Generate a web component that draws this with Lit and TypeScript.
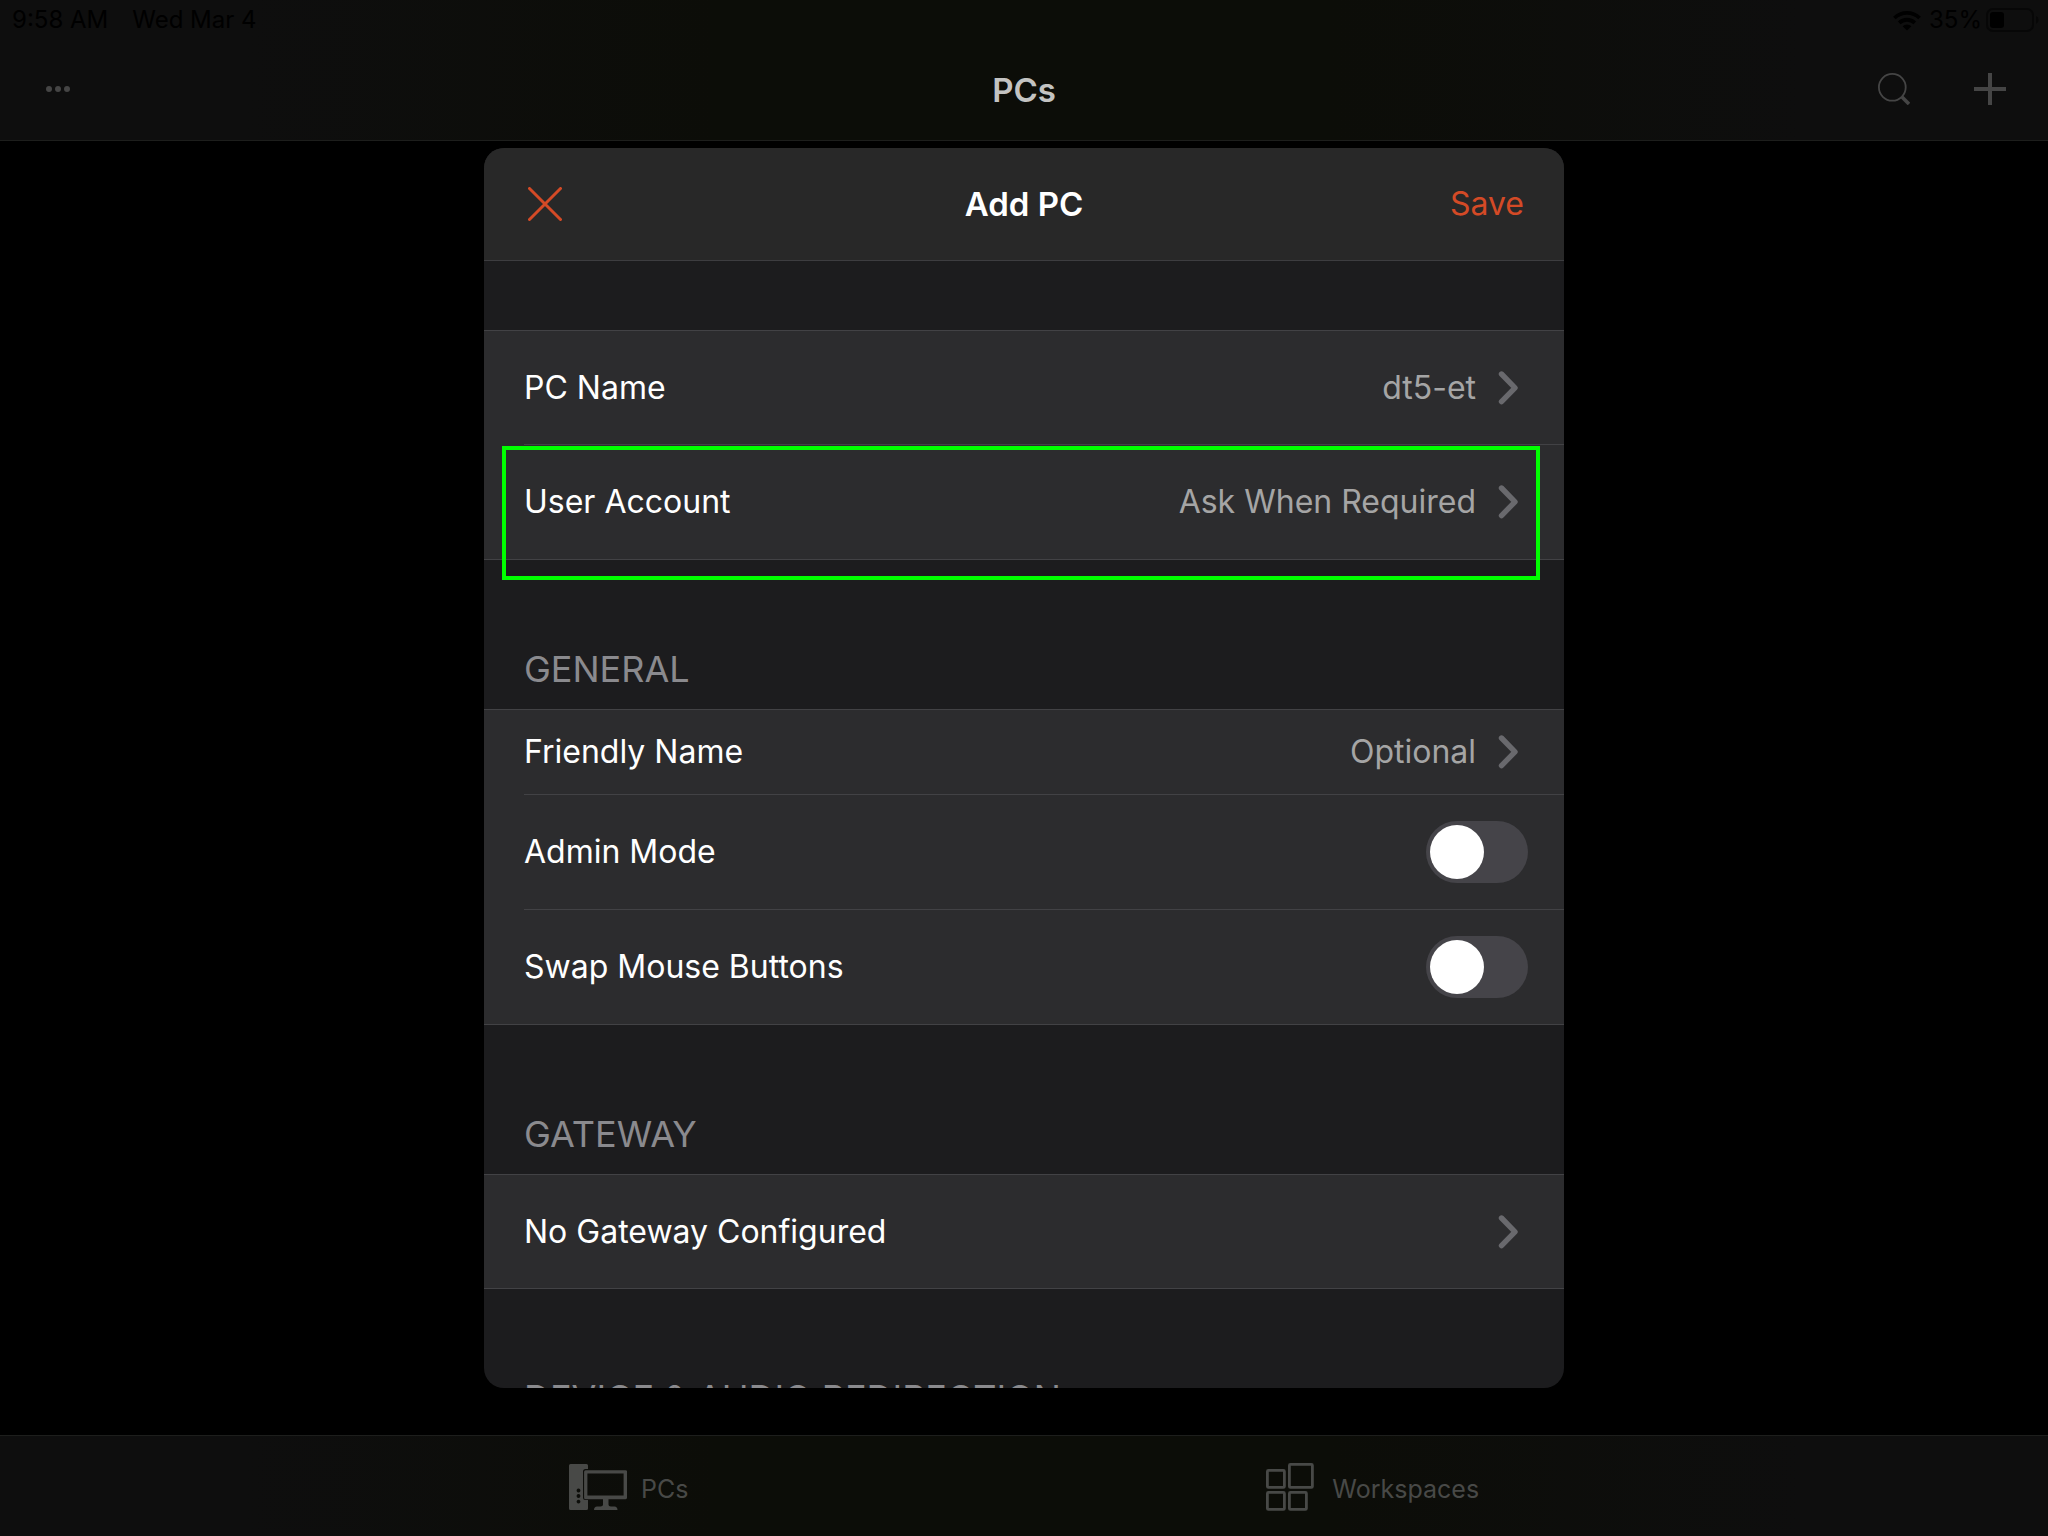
import { LitElement, html, css, svg, nothing } from "lit";
import { customElement, state } from "lit/decorators.js";

interface Row {
  kind: "link" | "switch";
  label: string;
  value?: string;
  compact?: boolean;
  marked?: boolean;
}

interface Section {
  title?: string;
  rows: Row[];
}

const SECTIONS: Section[] = [
  {
    rows: [
      { kind: "link", label: "PC Name", value: "dt5-et" },
      { kind: "link", label: "User Account", value: "Ask When Required", marked: true },
    ],
  },
  {
    title: "General",
    rows: [
      { kind: "link", label: "Friendly Name", value: "Optional", compact: true },
      { kind: "switch", label: "Admin Mode" },
      { kind: "switch", label: "Swap Mouse Buttons" },
    ],
  },
  { title: "Gateway", rows: [{ kind: "link", label: "No Gateway Configured" }] },
  { title: "Device & Audio Redirection", rows: [] },
];

const moreIcon = svg`<svg width="24" height="6" viewBox="0 0 24 6" fill="currentColor" aria-hidden="true">
  <circle cx="3" cy="3" r="3"/><circle cx="12" cy="3" r="3"/><circle cx="21" cy="3" r="3"/></svg>`;

const searchIcon = svg`<svg width="32" height="32" viewBox="0 0 32 32" fill="none" stroke="currentColor" aria-hidden="true">
  <circle cx="14.3" cy="14.3" r="13.4" stroke-width="1.8"/><path d="M24 24l7 7" stroke-width="3.6"/></svg>`;

const plusIcon = svg`<svg width="32" height="32" viewBox="0 0 32 32" fill="none" stroke="currentColor" stroke-width="4" aria-hidden="true">
  <path d="M16 0v32M0 16h32"/></svg>`;

const closeIcon = svg`<svg width="34" height="34" viewBox="0 0 34 34" fill="none" stroke="currentColor" stroke-width="3" stroke-linecap="round" aria-hidden="true">
  <path d="M1.5 1.5l31 31M32.5 1.5l-31 31"/></svg>`;

const chevronIcon = svg`<svg class="chevron" width="20" height="34" viewBox="0 0 20 34" fill="none" stroke="currentColor" stroke-width="5.4" stroke-linecap="round" stroke-linejoin="round" aria-hidden="true">
  <path d="M3.500 3l13.500 13.800L3.500 30.600"/></svg>`;

const wifiIcon = svg`<svg width="28" height="21" viewBox="0 0 28 21" fill="none" stroke="currentColor" stroke-width="3.8" aria-hidden="true">
  <path d="M1.4 8a18 18 0 0 1 25.2 0"/><path d="M6.2 12.9a11.2 11.2 0 0 1 15.6 0"/>
  <path d="M9.6 16.3a6.4 6.4 0 0 1 8.8 0L14 20.6z" fill="currentColor" stroke="none"/></svg>`;

const batteryIcon = svg`<svg width="54" height="24" viewBox="0 0 54 24" aria-hidden="true">
  <rect x="1" y="1" width="46" height="22" rx="6" fill="none" stroke="#070707" stroke-width="2"/>
  <rect x="4" y="4" width="14" height="16" rx="3" fill="#000"/>
  <path d="M50 8a4.4 4.4 0 0 1 0 8z" fill="#070707"/></svg>`;

const pcIcon = svg`<svg width="58" height="46" viewBox="0 0 58 46" fill="currentColor" aria-hidden="true">
  <path fill-rule="evenodd" d="M1.5 0h16a1.500 1.500 0 0 1 1.500 1.500V5H16.500a2.500 2.500 0 0 0-2.500 2.500V33.500a2.500 2.500 0 0 0 2.500 2.500H19V44.500a1.500 1.500 0 0 1-1.500 1.500H1.5A1.500 1.500 0 0 1 0 44.500V1.500A1.500 1.500 0 0 1 1.500 0z
  M9.500 24.600a1.900 1.900 0 1 0 .01 0zM9.500 30.100a1.900 1.900 0 1 0 .01 0zM9.500 35.700a1.900 1.900 0 1 0 .01 0z"/>
  <path fill-rule="evenodd" d="M16.600 6.200h40a1.500 1.500 0 0 1 1.500 1.500v26a1.500 1.500 0 0 1-1.500 1.500h-40a1.500 1.500 0 0 1-1.500-1.500v-26a1.500 1.500 0 0 1 1.500-1.500zM18.400 9.600v22h36.200v-22z"/>
  <path d="M34 34h5.500v6.500c0 1.200 1 1.900 2.500 1.900h3.500c1.800 0 3 1.300 3 3.600H25c0-2.300 1.200-3.600 3-3.600h3.500c1.500 0 2.500-.7 2.500-1.900z"/></svg>`;

const workspacesIcon = svg`<svg width="48" height="48" viewBox="0 0 48 48" fill="none" stroke="currentColor" stroke-width="2.8" aria-hidden="true">
  <rect x="1.400" y="7.400" width="17" height="17" rx="1"/><rect x="23.400" y="1.400" width="23" height="23" rx="1"/>
  <rect x="1.400" y="29.400" width="17" height="17" rx="1"/><rect x="23.400" y="29.400" width="17" height="17" rx="1"/></svg>`;

@customElement("app-root")
export class AppRoot extends LitElement {
  @state() private on = new Set<string>();

  static styles = css`
    :host {
      display: block;
      position: relative;
      min-height: 100vh;
      background: #000;
      color: #fff;
      font-family: Inter, "Liberation Sans", sans-serif;
      font-size: 32px;
      line-height: 40px;
    }
    * {
      box-sizing: border-box;
    }
    button {
      padding: 0;
      border: 0;
      background: none;
      color: inherit;
      font: inherit;
      cursor: pointer;
    }
    svg {
      display: block;
      flex: none;
    }
    h1,
    h2,
    h3 {
      margin: 0;
      font-size: inherit;
    }
    .page {
      display: flex;
      flex-direction: column;
      min-height: 100vh;
    }
    .bar {
      background: linear-gradient(90deg, #0e0e0e 12%, #0c0d08 35%, #0c0d08 65%, #0e0e0e 88%);
      color: #454545;
    }
    .top {
      border-bottom: 1px solid #1d1e1c;
    }
    .status {
      display: flex;
      align-items: center;
      justify-content: space-between;
      height: 40px;
      padding: 0 8px 0 12px;
      color: #000;
      font-size: 24px;
    }
    .status-group {
      display: flex;
      align-items: center;
    }
    .date {
      margin-left: 24px;
    }
    .percent {
      margin: 0 4px 0 8px;
    }
    .nav {
      display: grid;
      grid-template-columns: 1fr auto 1fr;
      align-items: center;
      height: 100px;
      padding: 0 42px;
    }
    .nav-title,
    .head-title {
      font-size: 33px;
      font-weight: 600;
    }
    .nav-title {
      color: #c3c3c2;
    }
    .nav-actions {
      display: flex;
      gap: 64px;
      padding: 0 0 2px 4px;
    }
    .nav-actions.end {
      justify-content: flex-end;
    }
    .content {
      flex: 1;
    }
    .tabs {
      display: flex;
      align-items: center;
      justify-content: center;
      gap: min(578px, 30vw);
      height: 101px;
      padding-top: 2px;
      border-top: 1px solid #1d1e1c;
      color: #484947;
      font-size: 25px;
    }
    .tab {
      display: flex;
      align-items: center;
      gap: 14px;
    }
    .tab.wide {
      gap: 18px;
    }
    .tab-label {
      padding-top: 4px;
    }
    .overlay {
      position: absolute;
      inset: 0;
      display: flex;
      justify-content: center;
      padding: 148px 24px;
    }
    .dialog {
      display: flex;
      flex-direction: column;
      width: 100%;
      max-width: 1080px;
      overflow: hidden;
      border-radius: 20px;
      background: #1c1c1e;
    }
    .head {
      display: grid;
      flex: none;
      grid-template-columns: 1fr auto 1fr;
      align-items: center;
      height: 113px;
      padding: 0 40px;
      border-bottom: 1px solid #3d3d40;
      background: #282828;
    }
    .accent {
      justify-self: start;
      padding-left: 4px;
      color: #d44a26;
    }
    .accent.end {
      justify-self: end;
    }
    .body {
      flex: 1;
      min-height: 0;
      overflow: hidden;
      padding-top: 69px;
    }
    .heading {
      padding: 89px 40px 20px;
      color: #8a8a8e;
      font-size: 36px;
      font-weight: 400;
      text-transform: uppercase;
      white-space: nowrap;
    }
    .group {
      padding-left: 40px;
      border: solid #424245;
      border-width: 1px 0;
      background: #2c2c2e;
    }
    .row {
      position: relative;
      display: flex;
      align-items: center;
      width: 100%;
      height: 113px;
      text-align: left;
    }
    .row + .row {
      height: 115px;
      border-top: 1px solid #424245;
    }
    .row.compact {
      height: 84px;
    }
    .label {
      flex: 1;
    }
    .link {
      padding-right: 46px;
    }
    .value {
      margin-right: 22px;
      color: #a5a5a5;
    }
    .chevron {
      color: #69696d;
    }
    .mark {
      position: absolute;
      inset: 1px 24px -21px -22px;
      z-index: 1;
      border: 4px solid #00ff00;
      pointer-events: none;
    }
    .toggle-row {
      padding-right: 36px;
    }
    .toggle {
      display: flex;
      align-items: center;
      width: 102px;
      height: 62px;
      margin: 0;
      padding: 4px;
      appearance: none;
      border-radius: 31px;
      background: #454449;
      cursor: pointer;
    }
    .toggle::before {
      content: "";
      width: 54px;
      height: 54px;
      border-radius: 50%;
      background: #fff;
    }
    .toggle:checked {
      justify-content: flex-end;
      background: #30d158;
    }
  `;

  private flip(label: string, checked: boolean) {
    const next = new Set(this.on);
    if (checked) next.add(label);
    else next.delete(label);
    this.on = next;
  }

  private renderRow(row: Row) {
    if (row.kind === "switch") {
      const id = row.label.toLowerCase().replace(/ /g, "-");
      return html`<div class="row toggle-row">
        <label class="label" for=${id}>${row.label}</label>
        <input
          class="toggle"
          id=${id}
          type="checkbox"
          role="switch"
          .checked=${this.on.has(row.label)}
          @change=${(e: Event) => this.flip(row.label, (e.target as HTMLInputElement).checked)}
        />
      </div>`;
    }
    return html`<button class="row link ${row.compact ? "compact" : ""}" type="button">
      <span class="label">${row.label}</span>
      ${row.value ? html`<span class="value">${row.value}</span>` : nothing}
      ${chevronIcon}
      ${row.marked ? html`<span class="mark"></span>` : nothing}
    </button>`;
  }

  private renderSection(section: Section) {
    return html`<section>
      ${section.title ? html`<h3 class="heading">${section.title}</h3>` : nothing}
      ${section.rows.length ? html`<div class="group">${section.rows.map((r) => this.renderRow(r))}</div>` : nothing}
    </section>`;
  }

  render() {
    return html`
      <div class="page">
        <header class="bar top">
          <div class="status">
            <div class="status-group"><span>9:58 AM</span><span class="date">Wed Mar 4</span></div>
            <div class="status-group">${wifiIcon}<span class="percent">35%</span>${batteryIcon}</div>
          </div>
          <div class="nav">
            <div class="nav-actions">
              <button type="button" aria-label="More">${moreIcon}</button>
            </div>
            <h1 class="nav-title">PCs</h1>
            <div class="nav-actions end">
              <button type="button" aria-label="Search">${searchIcon}</button>
              <button type="button" aria-label="Add">${plusIcon}</button>
            </div>
          </div>
        </header>
        <main class="content"></main>
        <nav class="bar tabs">
          <button class="tab" type="button">${pcIcon}<span class="tab-label">PCs</span></button>
          <button class="tab wide" type="button">${workspacesIcon}<span class="tab-label">Workspaces</span></button>
        </nav>
      </div>
      <div class="overlay">
        <div class="dialog" role="dialog" aria-labelledby="dialog-title">
          <div class="head">
            <button class="accent" type="button" aria-label="Close">${closeIcon}</button>
            <h2 class="head-title" id="dialog-title">Add PC</h2>
            <button class="accent end" type="button">Save</button>
          </div>
          <div class="body">${SECTIONS.map((s) => this.renderSection(s))}</div>
        </div>
      </div>
    `;
  }
}
